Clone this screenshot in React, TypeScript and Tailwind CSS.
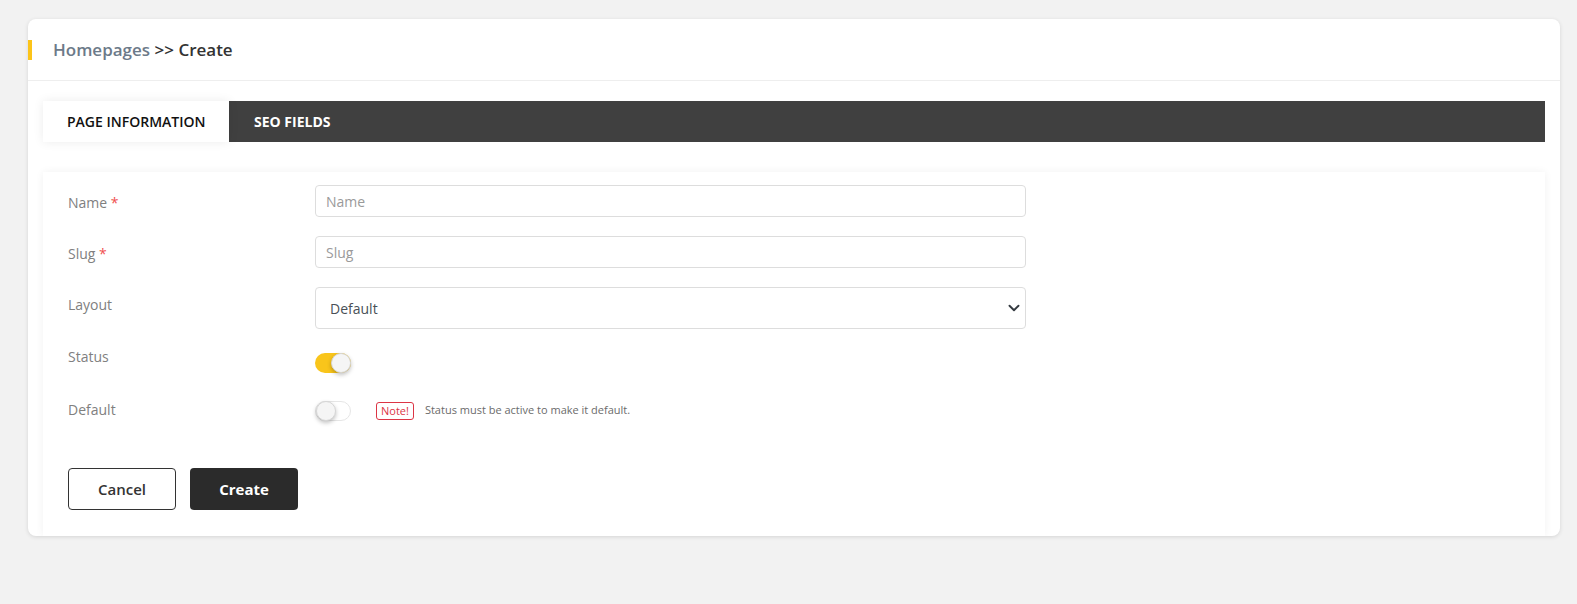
// ページ作成フォーム（Homepages >> Create）
import { useState } from "react";

const font = { fontFamily: '"Open Sans", "Noto Sans", sans-serif' };

export default function App() {
  const [status, setStatus] = useState(true);
  const [isDefault, setIsDefault] = useState(false);

  return (
    <div className="min-h-[604px] bg-[#f2f2f2] pl-[28px] pr-[17px] pt-[19px]" style={font}>
      <div className="overflow-hidden rounded-[8px] bg-white shadow-[0_1px_4px_rgba(0,0,0,0.12)]">
        {/* ヘッダー */}
        <div className="flex h-[62px] items-center border-b border-[#eeeeee]">
          <div className="h-[20px] w-[4px] bg-[#fcc419]" />
          <h1 className="ml-[21px] text-[17px] font-semibold text-[#333333]">
            <span className="text-[#6c7a89]">Homepages</span> &gt;&gt; Create
          </h1>
        </div>

        <div className="px-[15px] pt-[20px]">
          {/* タブ */}
          <div className="flex h-[41px] bg-[#404040]">
            <button className="w-[186px] bg-white pl-[24px] text-left text-[14px] font-semibold text-[#111111] shadow-[0_0_10px_rgba(0,0,0,0.08)]">
              PAGE INFORMATION
            </button>
            <button className="pl-[25px] text-[14px] font-bold text-white">SEO FIELDS</button>
          </div>

          {/* フォーム */}
          <div className="mt-[30px] bg-white px-[25px] pb-[26px] pt-[13px] shadow-[0_0_8px_rgba(0,0,0,0.06)]">
            <Row label="Name" required>
              <input
                placeholder="Name"
                className="h-[32px] w-[711px] rounded-[4px] border border-[#dddddd] px-[10px] text-[14px] text-[#495057] outline-none placeholder:text-[#9a9a9a]"
              />
            </Row>
            <Row label="Slug" required className="mt-[19px]">
              <input
                placeholder="Slug"
                className="h-[32px] w-[711px] rounded-[4px] border border-[#dddddd] px-[10px] text-[14px] text-[#495057] outline-none placeholder:text-[#9a9a9a]"
              />
            </Row>
            <Row label="Layout" className="mt-[19px]">
              <div className="relative w-[711px]">
                <select className="h-[42px] w-full appearance-none rounded-[4px] border border-[#dddddd] bg-white px-[14px] text-[14px] text-[#495057] outline-none">
                  <option>Default</option>
                </select>
                <svg
                  viewBox="0 0 16 16"
                  className="pointer-events-none absolute right-[6px] top-[15px] h-[12px] w-[12px]"
                  fill="none"
                  stroke="#343a40"
                  strokeWidth="2.5"
                  strokeLinecap="round"
                  strokeLinejoin="round"
                >
                  <path d="m2 5 6 6 6-6" />
                </svg>
              </div>
            </Row>
            <Row label="Status" className="mt-[10px]">
              <div className="pt-[14px]">
                <Toggle on={status} onChange={() => setStatus(!status)} />
              </div>
            </Row>
            <Row label="Default" className="mt-[13px]">
              <div className="flex items-center pt-[8px]">
                <Toggle on={isDefault} onChange={() => setIsDefault(!isDefault)} />
                <span className="ml-[25px] rounded-[3px] border border-[#dc3545] px-[4px] text-[11px] leading-[16px] text-[#dc3545]">
                  Note!
                </span>
                <span className="ml-[11px] text-[11px] text-[#6b6b6b]">
                  Status must be active to make it default.
                </span>
              </div>
            </Row>

            {/* ボタン */}
            <div className="mt-[47px] flex gap-[14px]">
              <button className="h-[42px] w-[108px] rounded-[4px] border border-[#333333] bg-white text-[15px] font-semibold text-[#333333]">
                Cancel
              </button>
              <button className="h-[42px] w-[108px] rounded-[4px] bg-[#2b2b2b] text-[15px] font-bold text-white">
                Create
              </button>
            </div>
          </div>
        </div>
      </div>
    </div>
  );
}

// ラベル＋入力の行
type RowProps = {
  label: string;
  required?: boolean;
  className?: string;
  children: React.ReactNode;
};

function Row({ label, required, className = "", children }: RowProps) {
  return (
    <div className={`flex ${className}`}>
      <label className="w-[247px] shrink-0 pt-[7px] text-[14px] leading-[22px] text-[#808080]">
        {label}
        {required && <span className="text-[#f05050]"> *</span>}
      </label>
      {children}
    </div>
  );
}

// トグルスイッチ
function Toggle({ on, onChange }: { on: boolean; onChange: () => void }) {
  return (
    <button
      onClick={onChange}
      className={`relative h-[20px] w-[36px] rounded-full ${
        on ? "bg-[#f9c51b]" : "border border-[#e6e6e6] bg-white"
      }`}
    >
      <span
        className={`absolute top-1/2 h-[20px] w-[20px] -translate-y-1/2 rounded-full border border-[#d6d6d6] bg-[#f5f5f5] shadow-[0_2px_4px_rgba(0,0,0,0.25)] ${
          on ? "right-0" : "left-0"
        }`}
      />
    </button>
  );
}
